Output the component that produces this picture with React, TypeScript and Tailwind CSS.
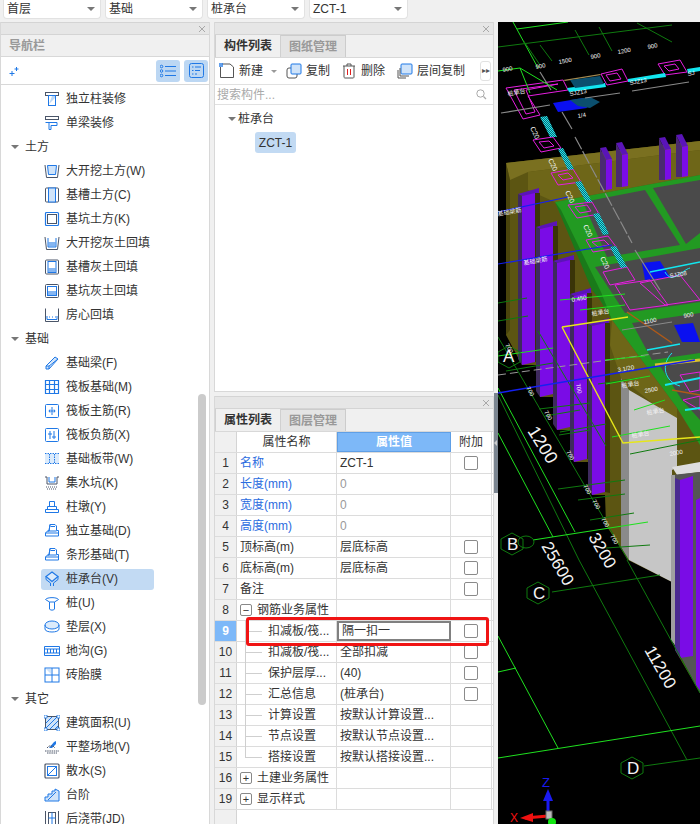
import React from "react";

const BLUE = "#1f78e6";
const DARK = "#4a5568";

// nav icons, all drawn in a 16x16 box
function NavIcon({ name }: { name: string }) {
  const s = { fill: "none", stroke: BLUE, strokeWidth: 1 };
  const d = { fill: "none", stroke: DARK, strokeWidth: 1 };
  let body: React.ReactNode = null;
  switch (name) {
    case "col":
      body = <><rect x="1.5" y="1.5" width="13" height="3" {...d} /><rect x="4.5" y="4.5" width="7" height="10" {...s} /><path d="M5 13L11 7V5H8" fill="#bcd8f6" /></>;
      break;
    case "beam":
      body = <><rect x="1.5" y="1.5" width="13" height="3" {...d} /><path d="M1.5 7.5H13V10.500H7V14.500H5V8" {...s} /></>;
      break;
    case "dig":
      body = <><path d="M1 2L2.500 14.500H13.500L15 2" {...d} /><path d="M3.500 2.500H12.500L11.500 11.500H4.500Z" fill="#cfe3f9" stroke={BLUE} /></>;
      break;
    case "trench":
      body = <><rect x="1.500" y="1" width="13" height="14" rx="1" {...d} /><rect x="4.500" y="1" width="7" height="14" fill="#cfe3f9" stroke={BLUE} /></>;
      break;
    case "pit":
      body = <><rect x="1.500" y="1.500" width="13" height="13" rx="1" stroke={BLUE} strokeWidth="1.200" fill="none" /><rect x="3.500" y="3.500" width="9" height="9" {...d} /></>;
      break;
    case "digfill":
      body = <><path d="M1 2L2.500 14.500H13.500L15 2" {...d} /><path d="M4 3V12H12V3" {...s} /><rect x="4.500" y="7" width="7" height="4.500" fill={BLUE} opacity=".55" /></>;
      break;
    case "trenchfill":
      body = <><rect x="1.500" y="1" width="13" height="14" rx="1" {...d} /><rect x="4" y="2.500" width="8" height="11" {...s} /><rect x="4.500" y="9" width="7" height="4" fill={BLUE} opacity=".55" /></>;
      break;
    case "pitfill":
      body = <><rect x="1.500" y="1.500" width="13" height="13" rx="1" {...d} /><rect x="3.500" y="3.500" width="9" height="9" {...s} /><rect x="4" y="8" width="8" height="4" fill={BLUE} opacity=".55" /></>;
      break;
    case "room":
      body = <><path d="M1.500 1.500V14.500H14.500V1.500" {...d} /><path d="M3 9V12.500H13V9" {...s} /><path d="M5 10H6M8 10H9M11 10H12" {...s} /></>;
      break;
    case "fbeam":
      body = <path d="M2 11L11 2L14 4L5 14L2 14ZM2 11L5 11L14 4M5 11V14" fill="#cfe3f9" stroke={BLUE} />;
      break;
    case "raft":
      body = <path d="M1.500 1.500H14.500V14.500H1.500ZM1.500 5.500H14.500M1.500 10.500H14.500M5.500 1.500V14.500M10.500 1.500V14.500" stroke={BLUE} strokeWidth="1.200" fill="none" />;
      break;
    case "rmain":
      body = <><rect x="1.500" y="1.500" width="13" height="13" rx="1" {...s} /><path d="M8 4V12M5 8H11M6 6.500L5 8L6 9.500M10 6.500L11 8L10 9.500" {...s} /></>;
      break;
    case "rneg":
      body = <><rect x="1.500" y="1.500" width="13" height="13" rx="1" {...s} /><path d="M6 4V12M10 4V12M4 7H8M8 10H12" {...s} /></>;
      break;
    case "strip":
      body = <><rect x="1" y="3" width="14" height="9" fill="#dcebfb" /><path d="M1 2.500H15M1 12.500H15M5.500 3V12M10.500 3V12" stroke={BLUE} strokeDasharray="1.500 1" fill="none" /></>;
      break;
    case "sump":
      body = <><path d="M1 2H3V9H13V2H15" {...d} /><path d="M5 2V7H11V2" {...s} /><path d="M2 12H14M3 14H13" stroke={DARK} strokeDasharray="1 1" fill="none" /></>;
      break;
    case "pier":
      body = <path d="M5.500 2.500H10.500V7.500H5.500ZM3.500 7.500H12.500V10.500H3.500ZM1.500 10.500H14.500V13.500H1.500Z" {...s} />;
      break;
    case "iso":
      body = <path d="M6 1.500H11L12.500 3V7.500H14.500V13H1.500V10L3.500 8H5ZM3.500 8H12.500M1.500 10H14.500M6 1.500L5 8M11 3.500H6.500" {...s} />;
      break;
    case "pile":
      body = <path d="M1.500 4.500C3 2 13 2 14.500 4.500L10.500 7V14C10.500 15.500 5.500 15.500 5.500 14V7Z M5.500 7H10.500" {...s} />;
      break;
    case "cap":
      body = <><path d="M8 1L14 5.500L8 10.500L2 5.500Z" fill="#dcebfb" stroke={BLUE} strokeWidth="1.200" /><path d="M2 5.500V8.500L6.500 12V15M14 5.500V8.500L9.500 12V15" stroke={BLUE} fill="none" /></>;
      break;
    case "pad":
      body = <><ellipse cx="8" cy="6" rx="7" ry="4" fill="#dcebfb" stroke={BLUE} /><path d="M1 6V10C1 14 15 14 15 10V6" {...s} /></>;
      break;
    case "ditch":
      body = <path d="M0.500 3.500H15.500V12.500H0.500ZM0.500 6H15.500M0.500 10H15.500M3.500 6V10M6.500 6V10M9.500 6V10M12.500 6V10" {...s} />;
      break;
    case "brick":
      body = <><rect x="1" y="1" width="14" height="14" {...s} /><path d="M1 8H15M8 1V15" {...s} /><path d="M2 2H7V7Z" fill="#cfe3f9" /></>;
      break;
    case "area":
      body = <><rect x="1.500" y="1.500" width="13" height="13" fill="#cfe3f9" {...{ stroke: DARK }} /><path d="M2 8L8 2M2 13L13 2M6 14L14 6M11 14L14 11" stroke={BLUE} /><path d="M0 0H3V3H0ZM13 0H16V3H13ZM0 13H3V16H0ZM13 13H16V16H13Z" fill="#fff" stroke={BLUE} strokeWidth=".8" /></>;
      break;
    case "level":
      body = <><path d="M5 9L10 3L12 2L12 5L8 9Z" fill={BLUE} /><path d="M3 9L5 7H9L11 9M1 12H15M3 14H13" stroke={DARK} strokeDasharray="1.500 .7" fill="none" /></>;
      break;
    case "apron":
      body = <><rect x="1" y="1" width="14" height="14" rx="1" {...d} strokeWidth="1.200" /><rect x="3.500" y="3.500" width="9" height="9" {...s} /><path d="M4 12L12 4" {...s} /></>;
      break;
    case "step":
      body = <path d="M1 10L4 10V7H8V4H11V2L15 4V14H1ZM4 13L12 5" fill="#cfe3f9" stroke={BLUE} />;
      break;
    case "pour":
      body = <><path d="M1.500 0V16M14.500 0V16" {...d} /><rect x="4.500" y="1.500" width="7" height="14" {...d} /><path d="M4.500 7H11.500M8 1.500V15.500" {...s} /></>;
      break;
  }
  return <svg width="16" height="16" viewBox="0 0 16 16" className="shrink-0">{body}</svg>;
}

const navRows: { t: string; icon?: string; sel?: boolean }[] = [
  { t: "独立柱装修", icon: "col" },
  { t: "单梁装修", icon: "beam" },
  { t: "土方" },
  { t: "大开挖土方(W)", icon: "dig" },
  { t: "基槽土方(C)", icon: "trench" },
  { t: "基坑土方(K)", icon: "pit" },
  { t: "大开挖灰土回填", icon: "digfill" },
  { t: "基槽灰土回填", icon: "trenchfill" },
  { t: "基坑灰土回填", icon: "pitfill" },
  { t: "房心回填", icon: "room" },
  { t: "基础" },
  { t: "基础梁(F)", icon: "fbeam" },
  { t: "筏板基础(M)", icon: "raft" },
  { t: "筏板主筋(R)", icon: "rmain" },
  { t: "筏板负筋(X)", icon: "rneg" },
  { t: "基础板带(W)", icon: "strip" },
  { t: "集水坑(K)", icon: "sump" },
  { t: "柱墩(Y)", icon: "pier" },
  { t: "独立基础(D)", icon: "iso" },
  { t: "条形基础(T)", icon: "iso" },
  { t: "桩承台(V)", icon: "cap", sel: true },
  { t: "桩(U)", icon: "pile" },
  { t: "垫层(X)", icon: "pad" },
  { t: "地沟(G)", icon: "ditch" },
  { t: "砖胎膜", icon: "brick" },
  { t: "其它" },
  { t: "建筑面积(U)", icon: "area" },
  { t: "平整场地(V)", icon: "level" },
  { t: "散水(S)", icon: "apron" },
  { t: "台阶", icon: "step" },
  { t: "后浇带(JD)", icon: "pour" },
];

type Row = { n: number; name: string; val?: string; blue?: boolean; grayVal?: boolean; check?: boolean; kind?: "open" | "closed" | "child" | "last"; sel?: boolean };

const rows: Row[] = [
  { n: 1, name: "名称", val: "ZCT-1", blue: true, check: true },
  { n: 2, name: "长度(mm)", val: "0", blue: true, grayVal: true },
  { n: 3, name: "宽度(mm)", val: "0", blue: true, grayVal: true },
  { n: 4, name: "高度(mm)", val: "0", blue: true, grayVal: true },
  { n: 5, name: "顶标高(m)", val: "层底标高", check: true },
  { n: 6, name: "底标高(m)", val: "层底标高", check: true },
  { n: 7, name: "备注", check: true },
  { n: 8, name: "钢筋业务属性", kind: "open" },
  { n: 9, name: "扣减板/筏...", val: "隔一扣一", check: true, kind: "child", sel: true },
  { n: 10, name: "扣减板/筏...", val: "全部扣减", check: true, kind: "child" },
  { n: 11, name: "保护层厚...", val: "(40)", check: true, kind: "child" },
  { n: 12, name: "汇总信息", val: "(桩承台)", check: true, kind: "child" },
  { n: 13, name: "计算设置", val: "按默认计算设置...", kind: "child" },
  { n: 14, name: "节点设置", val: "按默认节点设置...", kind: "child" },
  { n: 15, name: "搭接设置", val: "按默认搭接设置...", kind: "last" },
  { n: 16, name: "土建业务属性", kind: "closed" },
  { n: 19, name: "显示样式", kind: "closed" },
];

function Caret() {
  return <span className="w-0 h-0 border-x-[4px] border-x-transparent border-t-[4px] border-t-[#777] shrink-0" />;
}

function Dropdown({ label, w }: { label: string; w: string }) {
  return (
    <div className={`${w} h-[19px] bg-white rounded-b-[4px] border-x border-b border-[#e2e2e2] flex items-center justify-between pl-[3px] pr-[5px]`}>
      <span>{label}</span>
      <Caret />
    </div>
  );
}

function CloseStrip() {
  return (
    <div className="h-[11px] bg-[#e6e6e6] border-y border-[#d4d4d4] flex items-center justify-end pr-[3px] box-content">
      <svg width="8" height="8" viewBox="0 0 8 8"><path d="M1 1L7 7M7 1L1 7" stroke="#a8a8a8" /></svg>
    </div>
  );
}

function Tabs({ a, b }: { a: string; b: string }) {
  return (
    <div className="h-[22px] flex bg-[#f0f0f0] border-b border-[#d8d8d8] box-content">
      <div className="w-[66px] flex items-center justify-center font-bold text-[#333] border-x border-[#d0d0d0]">{a}</div>
      <div className="w-[65px] flex items-center justify-center font-bold text-[#999] bg-[#e4e4e4] border-r border-t border-[#cccccc]">{b}</div>
    </div>
  );
}

function CheckBox() {
  return <span className="block w-[14px] h-[14px] bg-white border border-[#8a8a8a] rounded-[2px]" />;
}

function PropRow({ r }: { r: Row }) {
  const child = r.kind === "child" || r.kind === "last";
  return (
    <div className="flex h-[21px] border-b border-[#dcdcdc]">
      <div className={`w-[22px] flex items-center justify-center border-r border-[#d4d4d4] ${r.sel ? "bg-[#7db8f8] text-white font-bold" : "bg-[#f0f0f0]"}`}>{r.n}</div>
      <div className={`w-[100px] relative flex items-center border-r border-[#dcdcdc] ${r.blue ? "text-[#2b6ce0]" : ""}`}>
        {child && <span className={`absolute left-[8px] top-[-1px] w-px bg-[#cfcfcf] ${r.kind === "last" ? "h-[11px]" : "h-[21px]"}`} />}
        {child && <span className="absolute left-[8px] top-[10px] w-[17px] h-px bg-[#cfcfcf]" />}
        {r.kind === "open" || r.kind === "closed" ? (
          <span className="ml-[3px] w-[12px] h-[12px] border border-[#888] rounded-[2px] flex items-center justify-center text-[11px] leading-none mr-[5px]">{r.kind === "open" ? "−" : "+"}</span>
        ) : null}
        <span className={child ? "ml-[31px]" : r.kind ? "" : "ml-[3px]"}>{r.name}</span>
      </div>
      <div className={`w-[114px] flex items-center pl-[3px] ${r.grayVal ? "text-[#999]" : ""} ${r.sel ? "border-2 border-[#808080]" : "border-r border-[#dcdcdc]"}`}>{r.val}</div>
      <div className="w-[41px] flex items-center justify-center border-r border-[#dcdcdc]">{r.check && <CheckBox />}</div>
    </div>
  );
}

// 3D view: coordinates below are screenshot pixels
const P = (pts: string, fill: string, extra?: React.SVGProps<SVGPolygonElement>) => <polygon points={pts} fill={fill} {...extra} />;
const L = (x1: number, y1: number, x2: number, y2: number, stroke: string, w = 1, dash?: string) => (
  <line x1={x1} y1={y1} x2={x2} y2={y2} stroke={stroke} strokeWidth={w} strokeDasharray={dash} />
);

const MAG = "#e61ee0";
const G1 = "#0f7a0f";
const G2 = "#1fe01f";

const labels: [number, number, number, string, number][] = [
  [503, 72, -10, "900", 6], [536, 69, -10, "900", 6], [559, 64, -10, "1500", 6], [591, 59, -10, "900", 6], [618, 54, -10, "1200", 6], [648, 49, -10, "900", 6],
  [570, 96, -10, "SJZ13", 6], [630, 85, -10, "SJZ13", 6], [688, 76, -10, "SJ", 6], [578, 118, -10, "1/4", 6], [508, 96, -10, "桩承台", 6],
  [530, 128, 65, "C20", 7], [548, 160, 65, "C20", 7], [565, 192, 65, "C20", 7], [583, 226, 65, "C20", 7], [600, 258, 65, "C20", 7],
  [498, 216, -10, "基础梁筋", 6], [524, 265, -10, "基础梁筋", 6], [670, 278, -10, "SJZ08", 6],
  [572, 302, -10, "0.450", 6], [592, 316, -10, "桩承台", 6], [644, 324, -10, "1100", 6], [684, 318, -10, "900", 6],
  [618, 372, -10, "3.1/20", 6], [622, 388, -10, "桩承台", 6], [645, 393, -10, "2500", 6], [647, 415, -10, "桩承台", 6], [632, 438, -10, "桩承台", 6], [670, 456, -10, "2000", 6],
  [526, 388, 60, "700", 6], [544, 412, 60, "700", 6], [566, 452, 60, "700", 6], [583, 486, 60, "700", 6], [592, 501, 60, "700", 6], [601, 519, 60, "700", 6], [610, 536, 60, "700", 6],
  [576, 384, 80, "700", 6], [505, 345, 60, "700", 6],
  [527, 431, 58, "1200", 18], [541, 546, 60, "25600", 17], [588, 537, 60, "3200", 17], [644, 650, 60, "11200", 17],
  [503, 362, 0, "A", 17], [507, 550, 0, "B", 17], [533, 599, 0, "C", 17], [627, 774, 0, "D", 17],
];

function Scene() {
  return (
    <svg viewBox="498 22 202 802" className="block w-[202px] h-[802px]" preserveAspectRatio="none">
      <defs>
        <pattern id="dots" width="2" height="2" patternUnits="userSpaceOnUse">
          <rect width="2" height="2" fill="#0a6a7a" />
          <rect width="1" height="1" fill="#28e6e6" />
          <rect x="1" y="1" width="1" height="1" fill="#28e6e6" />
        </pattern>
      </defs>
      <rect x="498" y="22" width="202" height="802" fill="#000" />

      {/* foundation body, stepped along the column feet */}
      {P("506,163 700,141 700,693 675,650 672,582 628,560 606,525 605,495 592,495 590,462 574,462 572,430 557,430 555,397 540,397 538,365 522,365 506,335", "#5c5512")}
      {P("506,163 700,141 700,150 528,172 510,180", "#7a7020")}
      {P("506,163 510,180 510,330 506,335", "#4a440c")}
      {P("528,172 700,150 700,175 555,202 528,190", "#6e6618")}

      {/* small columns on the back wall */}
      {[
        [606, 160, 190],
        [622, 155, 187],
        [665, 150, 180],
        [682, 147, 177],
      ].map(([x, top, bot]) => (
        <g key={x}>
          {P(`${x - 6},${top - 12} ${x},${top - 13} ${x + 6},${top - 1} ${x},${top}`, "#5a14b8")}
          {P(`${x - 6},${top - 12} ${x},${top} ${x},${bot} ${x - 6},${bot}`, "#4a2a70")}
          {P(`${x},${top} ${x + 6},${top - 1} ${x + 6},${bot - 1} ${x},${bot}`, "#7a0ce6")}
        </g>
      ))}

      {/* purple columns */}
      {[
        [522, 190, 365],
        [540, 223, 397],
        [557, 257, 430],
        [574, 290, 462],
        [592, 320, 495],
      ].map(([x, top, bot]) => (
        <g key={x}>
          {P(`${x - 4},${top + 4} ${x + 17},${top - 2} ${x + 17},${top + 3} ${x},${top + 6}`, "#5a14b8")}
          {P(`${x + 13},${top + 3} ${x + 18},${top + 3} ${x + 18},${bot - 2} ${x + 13},${bot - 3}`, "#3a3408")}
          {P(`${x - 4},${top + 4} ${x},${top + 6} ${x},${bot} ${x - 4},${bot - 6}`, "#3e2a5e")}
          {P(`${x},${top + 6} ${x + 13},${top + 3} ${x + 13},${bot - 3} ${x},${bot}`, "#7a0ce6")}
        </g>
      ))}

      {/* slab */}
      {P("555,202 700,175 700,445 677,408 612,320 595,290", "#229a22")}
      {P("555,202 561,210 601,292 612,320 600,300 592,290", "#1a7a1a")}
      {P("583,202 645,190 680,245 607,257", "#4a4a4a")}
      {P("653,188 700,180 700,233 686,244", "#4a4a4a")}
      {P("595,267 700,248 700,302 625,313", "#4a4a4a")}
      {P("632,323 700,313 700,353 652,360", "#4a4a4a")}
      {P("660,366 700,360 700,420 682,400", "#4a4a4a")}

      {/* structure below slab */}
      {P("612,320 677,408 677,423 621,378 610,345", "#6e6618")}
      {P("629,390 677,418 677,467 672,470 672,582 629,560", "#c6c6c6")}
      {P("621,378 629,390 629,560 621,547", "#8a8a8a")}
      {P("672,467 700,462 700,472 677,475", "#dedede")}
      {P("672,475 700,472 700,693 672,640", "#555")}
      {P("671,475 675,475 675,645 671,640", "#a0a0a0")}
      {P("680,480 693,476 693,656 680,658", "#7a0ce6")}
      {P("675,478 680,480 680,658 675,650", "#4a2a90")}
      {P("696,500 700,498 700,690 696,685", "#7a0ce6")}

      {/* column beams and mats on top */}
      {P("506,88 563,80 568,90 528,96 540,115 523,119", "none", { stroke: MAG, strokeWidth: 1 })}
      {P("514,90 558,84 526,90 535,112 526,114", "none", { stroke: MAG, strokeWidth: 1 })}
      {["601,74 622,69 628,81 607,85", "658,64 680,60 687,72 665,75", "533,140 553,137 561,148 541,152", "551,173 573,169 581,182 558,185", "568,205 592,202 599,214 577,218", "586,240 608,236 617,248 593,252", "603,272 627,267 635,280 610,285"].map((p) => (
        <polygon key={p} points={p} fill="none" stroke={MAG} />
      ))}
      {["606,75 617,73 621,79 610,81", "664,66 675,64 679,69 669,71", "539,142 549,141 554,146 544,148", "558,175 568,173 573,178 563,180", "575,207 587,205 591,211 580,213", "592,242 604,240 609,245 598,247"].map((p) => (
        <polygon key={p} points={p} fill="none" stroke={MAG} />
      ))}
      {P("567,88 605,83 606,87 569,92", "#12e6f0")}
      {P("628,79 665,73 666,77 628,82", "#12e6f0")}
      {P("687,69 700,67 700,71 688,73", "#12e6f0")}
      {P("563,80 600,74 601,75 565,81", "#a58a50")}
      {P("553,103 583,98 587,108 558,112", "#0a10f0")}
      {P("642,263 660,261 670,277 645,280", "#0a10f0")}
      {P("674,325 693,323 700,342 682,342", "#0a10f0")}
      {P("570,100 590,97 600,102 590,108 578,106", "#0b4f6e")}
      {P("570,80 600,76 604,84 575,88", "#0b4f6e")}
      {["540,117 547,116 557,137 550,137", "558,149 563,148 574,169 568,170", "575,182 581,181 592,202 586,202", "593,214 599,213 609,234 603,235", "610,247 616,246 627,267 621,268"].map((p) => (
        <polygon key={p} points={p} fill="url(#dots)" />
      ))}

      {/* magenta rebar on the slab */}
      {["615,285 650,280 668,305 630,310", "640,283 680,275 700,300 665,305", "680,375 700,372 700,390 690,392", "683,400 700,396 700,410"].map((p) => (
        <polygon key={p} points={p} fill="none" stroke={MAG} />
      ))}
      {L(650, 272, 700, 262, "#12e6f0", 1.500)}
      {L(647, 350, 680, 344, "#12e6f0", 1.500)}
      {L(665, 385, 700, 378, "#12e6f0", 2)}
      {L(685, 410, 700, 408, "#12e6f0", 2)}
      <path d="M672 353C660 365 665 382 680 386M665 272C672 285 682 270 690 268" fill="none" stroke="#12e6f0" />
      {L(627, 312, 672, 343, "#b05a18", 1.500)}
      {L(672, 390, 700, 395, "#b05a18", 1.500)}

      {/* grey axis lines */}
      {L(501, 113, 550, 105, "#8a8a8a", 1.200)}
      {L(585, 98, 620, 93, "#8a8a8a", 1.200)}
      {L(632, 91, 689, 82, "#8a8a8a", 1.200)}
      {L(540, 72, 551, 90, "#8a8a8a", 1.200)}
      {L(562, 112, 572, 129, "#8a8a8a", 1.200)}
      {L(575, 137, 632, 243, "#8a8a8a", 1.200, "14 2")}
      {L(635, 250, 660, 290, "#8a8a8a", 1.200)}
      {L(498, 375, 668, 352, "#9a9a9a", 1, "8 4")}
      {L(622, 330, 672, 322, "#8a8a8a", 1)}

      {/* grid lines */}
      {L(513, 22, 538, 68, G2)}
      {L(517, 29, 568, 22, G2)}
      {L(498, 47, 672, 25, G1)}
      {L(540, 45, 552, 61, G1)}
      {L(575, 30, 589, 55, G1)}
      {L(599, 27, 612, 51, G1)}
      {L(637, 23, 672, 42, G1)}
      {L(523, 40, 540, 65, G1)}
      {L(498, 71, 520, 68, G2)}
      {L(520, 68, 557, 90, G2)}
      {L(520, 68, 530, 93, G2)}
      {L(498, 337, 628, 560, G1)}
      {L(498, 395, 579, 560, G1)}
      {L(579, 560, 687, 760, G1)}
      {L(627, 560, 700, 693, G1)}
      {L(498, 388, 575, 532, G2)}
      {L(498, 433, 553, 537, G2)}
      {L(498, 636, 558, 748, G2)}
      {L(498, 758, 700, 726, G2)}
      {L(498, 672, 516, 668, G2)}
      {L(533, 540, 648, 522, G2, 1.200)}
      {L(552, 592, 660, 575, G1)}
      {L(644, 766, 700, 758, G1)}
      {L(560, 432, 606, 424, G1)}
      {L(545, 416, 580, 410, G1)}
      {L(558, 489, 625, 480, G1)}
      {L(578, 500, 625, 494, G1)}
      {L(590, 520, 634, 513, G1)}
      {L(606, 548, 650, 545, G1)}
      {L(498, 303, 527, 298, G1)}
      {L(498, 321, 528, 316, G1)}
      {L(498, 356, 553, 348, G2)}
      {L(506, 371, 553, 363, G1)}
      {L(539, 409, 590, 403, G1)}
      {L(559, 435, 590, 430, G1)}
      {L(560, 300, 625, 294, G2)}
      {L(580, 310, 625, 305, G2)}
      {L(538, 331, 606, 446, G1)}
      {L(598, 384, 640, 378, G1)}
      {L(605, 360, 645, 356, G2)}
      {L(606, 384, 650, 376, G2)}
      {L(634, 410, 665, 400, G2)}
      {L(612, 437, 670, 426, G2)}
      {L(630, 454, 700, 440, G1)}

      {/* yellow outline */}
      <path d="M562 327L628 317M562 327L623 443L700 437" fill="none" stroke="#e6e61a" strokeWidth="1.400" />
      {L(655, 365, 700, 360, "#d8c030", 3)}

      {/* blue lines */}
      {L(498, 212, 568, 197, "#1420f0", 1.200)}
      {L(498, 264, 612, 245, "#1420f0", 1.200)}
      {L(498, 393, 695, 360, "#1420f0", 1.400)}

      {/* hex axis bubbles */}
      {[[509, 357], [512, 544], [538, 593], [632, 768]].map(([x, y]) => (
        <polygon key={x} points={`${x - 11},${y - 5} ${x},${y - 11} ${x + 11},${y - 5} ${x + 11},${y + 5} ${x},${y + 11} ${x - 11},${y + 5}`} fill="none" stroke={G1} />
      ))}
      <ellipse cx="526" cy="542" rx="8" ry="6" fill="none" stroke={G1} />

      {labels.map(([x, y, rot, t, size]) => (
        <text key={`${x}-${y}`} x={x} y={y} fontSize={size} fill="#f4f4f4" transform={`rotate(${rot} ${x} ${y})`} fontFamily="'Liberation Sans','Noto Sans CJK SC',sans-serif">
          {t}
        </text>
      ))}

      {/* axis gizmo */}
      <path d="M548 812V795" stroke="#1a1af0" strokeWidth="3" />
      <path d="M548 789L553 801H543Z" fill="#1a1af0" />
      <text x="542" y="787" fontSize="13" fill="#1a1af0" fontFamily="'Liberation Sans',sans-serif">Z</text>
      <path d="M548 816L525 818" stroke="#f01010" strokeWidth="3" />
      <path d="M520 818L533 813V822Z" fill="#f01010" />
      <text x="510" y="822" fontSize="12" fill="#f01010" fontFamily="'Liberation Sans',sans-serif">X</text>
      <rect x="546" y="811" width="6" height="8" fill="#bbb" stroke="#666" />
      <circle cx="552" cy="822" r="4" fill="#12e612" />
    </svg>
  );
}

export default function App() {
  return (
    <div className="relative w-[700px] h-[824px] overflow-hidden bg-[#f0f0f0] text-[12px] leading-none text-[#333] font-['Liberation_Sans','Noto_Sans_CJK_SC',sans-serif]">
      {/* top dropdowns */}
      <div className="flex h-[22px] pl-[3px] gap-[4px]">
        <Dropdown label="首层" w="w-[98px]" />
        <Dropdown label="基础" w="w-[98px]" />
        <Dropdown label="桩承台" w="w-[98px]" />
        <Dropdown label="ZCT-1" w="w-[99px]" />
      </div>

      <div className="flex h-[802px]">
        {/* navigation panel */}
        <div className="w-[210px] shrink-0 flex flex-col border-x border-[#d8d8d8]">
          <CloseStrip />
          <div className="h-[21px] flex items-center pl-[8px] font-bold text-[#999] border-b border-[#d8d8d8] box-content">导航栏</div>
          <div className="h-[27px] bg-white border-b border-[#d8d8d8] flex items-center pl-[8px] pr-[1px] box-content">
            <svg width="10" height="12" viewBox="0 0 10 12"><path d="M3 6V11M0.500 8.500H5.500M7.500 2V6M5.500 4H9.500" stroke={BLUE} /></svg>
            <div className="ml-auto w-[24px] h-[22px] rounded-[3px] bg-[#bcd7f3] flex items-center justify-center">
              <svg width="16" height="14" viewBox="0 0 16 14"><path d="M5 2.500H16M5 7H16M5 11.500H16" stroke={BLUE} /><circle cx="1.500" cy="2.500" r="1.300" fill="none" stroke={BLUE} /><circle cx="1.500" cy="7" r="1.300" fill="none" stroke={BLUE} /><circle cx="1.500" cy="11.500" r="1.300" fill="none" stroke={BLUE} /></svg>
            </div>
            <div className="ml-[4px] w-[24px] h-[22px] rounded-[3px] bg-[#bcd7f3] flex items-center justify-center">
              <svg width="15" height="15" viewBox="0 0 15 15"><rect x="0.500" y="0.500" width="14" height="14" rx="2" fill="none" stroke={BLUE} /><path d="M3 4H4.500M6 4H12M3 7.500H4.500M6 7.500H11M3 11H4.500M6 11H8" stroke={BLUE} /></svg>
            </div>
          </div>
          <div className="relative flex-1 bg-white overflow-hidden">
            <div className="flex flex-col pt-[2px]">
              {navRows.map((r) =>
                r.icon ? (
                  <div key={r.t} className={`ml-[40px] mr-[55px] flex items-center pl-[3px] gap-[6px] ${r.sel ? "bg-[#c2daf3] rounded-[3px] h-[21px] my-[1.500px]" : "h-[24px]"}`}>
                    <NavIcon name={r.icon} />
                    <span className="whitespace-nowrap">{r.t}</span>
                  </div>
                ) : (
                  <div key={r.t} className="h-[24px] flex items-center pl-[10px] gap-[6px]">
                    <Caret />
                    <span>{r.t}</span>
                  </div>
                )
              )}
            </div>
            <div className="absolute left-[197px] top-[309px] w-[8px] h-[311px] rounded-[4px] bg-[#cbcbcb]" />
          </div>
        </div>

        {/* middle column */}
        <div className="w-[288px] shrink-0 flex flex-col pl-[4px] pr-[4px]">
          <div className="h-[370px] flex flex-col border-x border-b border-[#d8d8d8] bg-white">
            <CloseStrip />
            <Tabs a="构件列表" b="图纸管理" />
            <div className="h-[26px] bg-white border-b border-[#e0e0e0] flex items-center pl-[4px] box-content">
              <svg width="16" height="16" viewBox="0 0 16 16" className="shrink-0"><path d="M1.500 4V14.500H14.500V4L11 1H3" fill="none" stroke="#555" /><path d="M0 0H4V4H0Z" fill={BLUE} opacity=".7" /></svg>
              <span className="ml-[4px]">新建</span>
              <span className="ml-[8px] w-0 h-0 border-x-[3px] border-x-transparent border-t-[3px] border-t-[#999]" />
              <svg width="16" height="16" viewBox="0 0 16 16" className="ml-[9px] shrink-0"><rect x="1" y="5" width="10" height="10" rx="2" fill="#fff" stroke="#555" /><rect x="5" y="1" width="10" height="10" rx="1" fill="#cfe3f9" stroke={BLUE} /></svg>
              <span className="ml-[4px]">复制</span>
              <svg width="14" height="16" viewBox="0 0 14 16" className="ml-[12px] shrink-0"><path d="M1 3H13M2 3V14C2 15 3 15 3 15H11C12 15 12 14 12 14V3M5 3V1H9V3" fill="none" stroke="#555" /><path d="M5.500 6V12M8.500 6V12" stroke="#e02020" /></svg>
              <span className="ml-[5px]">删除</span>
              <svg width="16" height="16" viewBox="0 0 16 16" className="ml-[12px] shrink-0"><rect x="4" y="1" width="11" height="10" rx="1" fill="#cfe3f9" stroke={BLUE} /><path d="M3 5V13H12M1 7V15H9" fill="none" stroke="#555" /></svg>
              <span className="ml-[4px]">层间复制</span>
              <div className="ml-auto mr-[2px] w-[11px] h-[20px] border border-[#e2e2e2] rounded-[3px] flex items-center justify-center text-[8px] text-[#555]">▸▸</div>
            </div>
            <div className="h-[19px] bg-white border-b border-[#e0e0e0] flex items-center pl-[2px] pr-[6px] text-[#aaa] box-content">
              <span>搜索构件...</span>
              <svg width="11" height="11" viewBox="0 0 11 11" className="ml-auto"><circle cx="4.500" cy="4.500" r="3.700" fill="none" stroke="#aaa" /><path d="M7.500 7.500L10 10" stroke="#aaa" strokeWidth="1.300" /></svg>
            </div>
            <div className="flex-1 pl-[13px] pt-[2px]">
              <div className="h-[24px] flex items-center gap-[2px]"><Caret /><span>桩承台</span></div>
              <div className="ml-[27px] w-[41px] h-[21px] mt-[1px] bg-[#c2daf3] rounded-[3px] flex items-center justify-center">ZCT-1</div>
            </div>
          </div>

          <div className="mt-[4px] flex-1 flex flex-col border-x border-[#d8d8d8] bg-white">
            <CloseStrip />
            <Tabs a="属性列表" b="图层管理" />
            <div className="flex h-[20px] border-b border-[#dcdcdc] box-content">
              <div className="w-[22px] border-r border-[#d4d4d4] bg-[#f0f0f0]" />
              <div className="w-[100px] flex items-center justify-center border-r border-[#dcdcdc]">属性名称</div>
              <div className="w-[114px] flex items-center justify-center bg-[#7db8f8] border border-[#5f9fe6] text-white font-bold">属性值</div>
              <div className="w-[41px] flex items-center justify-center border-r border-[#dcdcdc]">附加</div>
            </div>
            {rows.map((r) => (
              <PropRow key={r.n} r={r} />
            ))}
            <div className="flex-1 w-[22px] bg-[#f0f0f0] border-r border-[#d4d4d4]" />
          </div>
        </div>

        {/* 3D view */}
        <Scene />
      </div>

      {/* splitter grip */}
      <div className="absolute left-[494px] top-[393px] w-[4px] h-[100px] bg-[#7b8590] flex items-center">
        <span className="w-0 h-0 border-y-[3px] border-y-transparent border-r-[3px] border-r-[#ccc]" />
      </div>

      {/* red callout */}
      <div className="absolute left-[246px] top-[617px] w-[243px] h-[29px] border-[3px] border-[#f01414] rounded-[3px]" />
    </div>
  );
}
